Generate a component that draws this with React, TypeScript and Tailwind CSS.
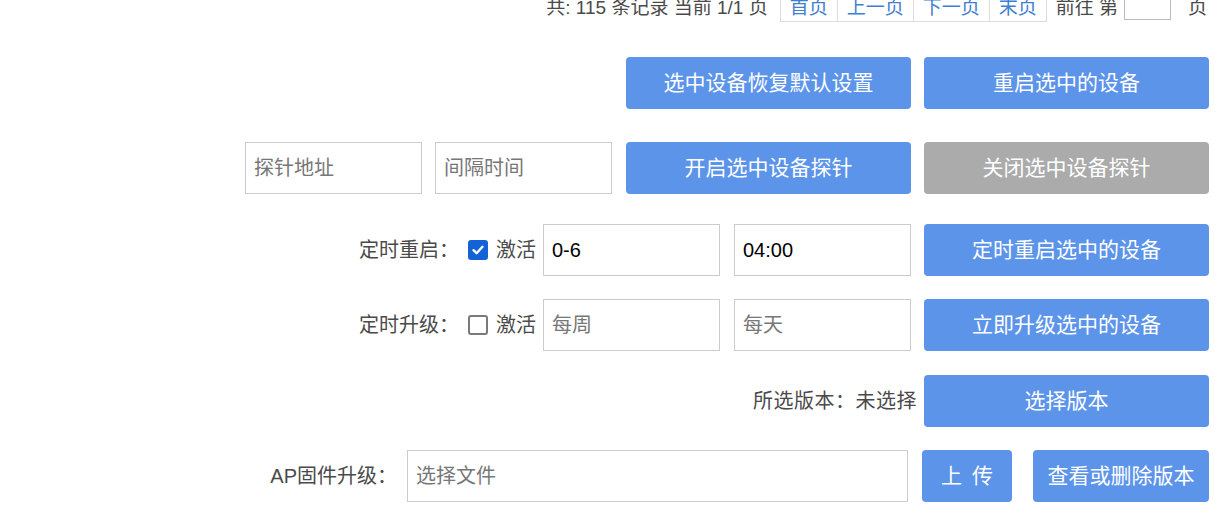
import React from "react";

const font = { fontFamily: '"Liberation Sans", "Noto Sans CJK SC", sans-serif' };

function Btn({ children, w, gray }: { children: React.ReactNode; w: string; gray?: boolean }) {
  return (
    <button
      className={`${w} h-[52px] shrink-0 rounded-[4px] text-[21px] text-white flex items-center justify-center ${
        gray ? "bg-[#ababab]" : "bg-[#5c94ea]"
      }`}
    >
      {children}
    </button>
  );
}

function Field({ w, placeholder, value }: { w: string; placeholder?: string; value?: string }) {
  return (
    <input
      className={`${w} h-[52px] shrink-0 border border-[#cccccc] bg-white px-[8px] text-[20px] text-black placeholder:text-[#777777] outline-none`}
      placeholder={placeholder}
      defaultValue={value}
    />
  );
}

function Check({ checked }: { checked?: boolean }) {
  return checked ? (
    <span className="w-[20px] h-[20px] shrink-0 rounded-[3px] bg-[#1463d6] flex items-center justify-center">
      <svg width="14" height="14" viewBox="0 0 14 14" fill="none">
        <path d="M2.5 7.2 L5.6 10.2 L11.5 3.8" stroke="white" strokeWidth="2.4" strokeLinecap="round" strokeLinejoin="round" />
      </svg>
    </span>
  ) : (
    <span className="w-[20px] h-[20px] shrink-0 rounded-[3px] border-2 border-[#7a7a7a] bg-white" />
  );
}

export default function App() {
  const pages = ["首页", "上一页", "下一页", "末页"];
  return (
    <div className="w-[1225px] h-[525px] overflow-hidden bg-white text-[#4a4a4a]" style={font}>
      {/* pagination */}
      <div className="-mt-[8px] h-[30px] flex items-center justify-end pr-[18px] text-[19px] leading-none">
        <span className="mr-[12px] whitespace-nowrap">共: 115 条记录 当前 1/1 页</span>
        <div className="flex h-[30px]">
          {pages.map((p, i) => (
            <span
              key={p}
              className={`h-[30px] flex items-center px-[9px] border border-[#dddddd] text-[#3f7fcf] whitespace-nowrap ${i > 0 ? "border-l-0" : ""}`}
            >
              {p}
            </span>
          ))}
        </div>
        <span className="ml-[9px] whitespace-nowrap">前往 第</span>
        <span className="ml-[6px] w-[47px] h-[25px] border border-[#bbbbbb] bg-white" />
        <span className="ml-[17px]">页</span>
      </div>

      {/* row 1 */}
      <div className="mt-[35px] flex justify-end gap-[13px] pr-[16px]">
        <Btn w="w-[285px]">选中设备恢复默认设置</Btn>
        <Btn w="w-[285px]">重启选中的设备</Btn>
      </div>

      {/* row 2 */}
      <div className="mt-[33px] flex justify-end items-center pr-[16px]">
        <Field w="w-[177px]" placeholder="探针地址" />
        <div className="w-[13px]" />
        <Field w="w-[177px]" placeholder="间隔时间" />
        <div className="w-[14px]" />
        <Btn w="w-[285px]">开启选中设备探针</Btn>
        <div className="w-[13px]" />
        <Btn w="w-[285px]" gray>
          关闭选中设备探针
        </Btn>
      </div>

      {/* row 3 */}
      <div className="mt-[30px] flex justify-end items-center pr-[16px] text-[20px]">
        <span>定时重启：</span>
        <div className="w-[9px]" />
        <Check checked />
        <span className="ml-[8px] mr-[7px]">激活</span>
        <Field w="w-[177px]" value="0-6" />
        <div className="w-[14px]" />
        <Field w="w-[177px]" value="04:00" />
        <div className="w-[13px]" />
        <Btn w="w-[285px]">定时重启选中的设备</Btn>
      </div>

      {/* row 4 */}
      <div className="mt-[23px] flex justify-end items-center pr-[16px] text-[20px]">
        <span>定时升级：</span>
        <div className="w-[9px]" />
        <Check />
        <span className="ml-[8px] mr-[7px]">激活</span>
        <Field w="w-[177px]" placeholder="每周" />
        <div className="w-[14px]" />
        <Field w="w-[177px]" placeholder="每天" />
        <div className="w-[13px]" />
        <Btn w="w-[285px]">立即升级选中的设备</Btn>
      </div>

      {/* row 5 */}
      <div className="mt-[24px] flex justify-end items-center pr-[16px] text-[20px]">
        <span className="mr-[7px] tracking-[0.5px]">所选版本：未选择</span>
        <Btn w="w-[285px]">选择版本</Btn>
      </div>

      {/* row 6 */}
      <div className="mt-[23px] flex justify-end items-center pr-[16px] text-[20px]">
        <span className="mr-[10px]">AP固件升级：</span>
        <Field w="w-[501px]" placeholder="选择文件" />
        <div className="w-[14px]" />
        <Btn w="w-[90px]">
          <span className="flex gap-[10px]">
            <span>上</span>
            <span>传</span>
          </span>
        </Btn>
        <div className="w-[21px]" />
        <Btn w="w-[176px]">查看或删除版本</Btn>
      </div>
    </div>
  );
}
